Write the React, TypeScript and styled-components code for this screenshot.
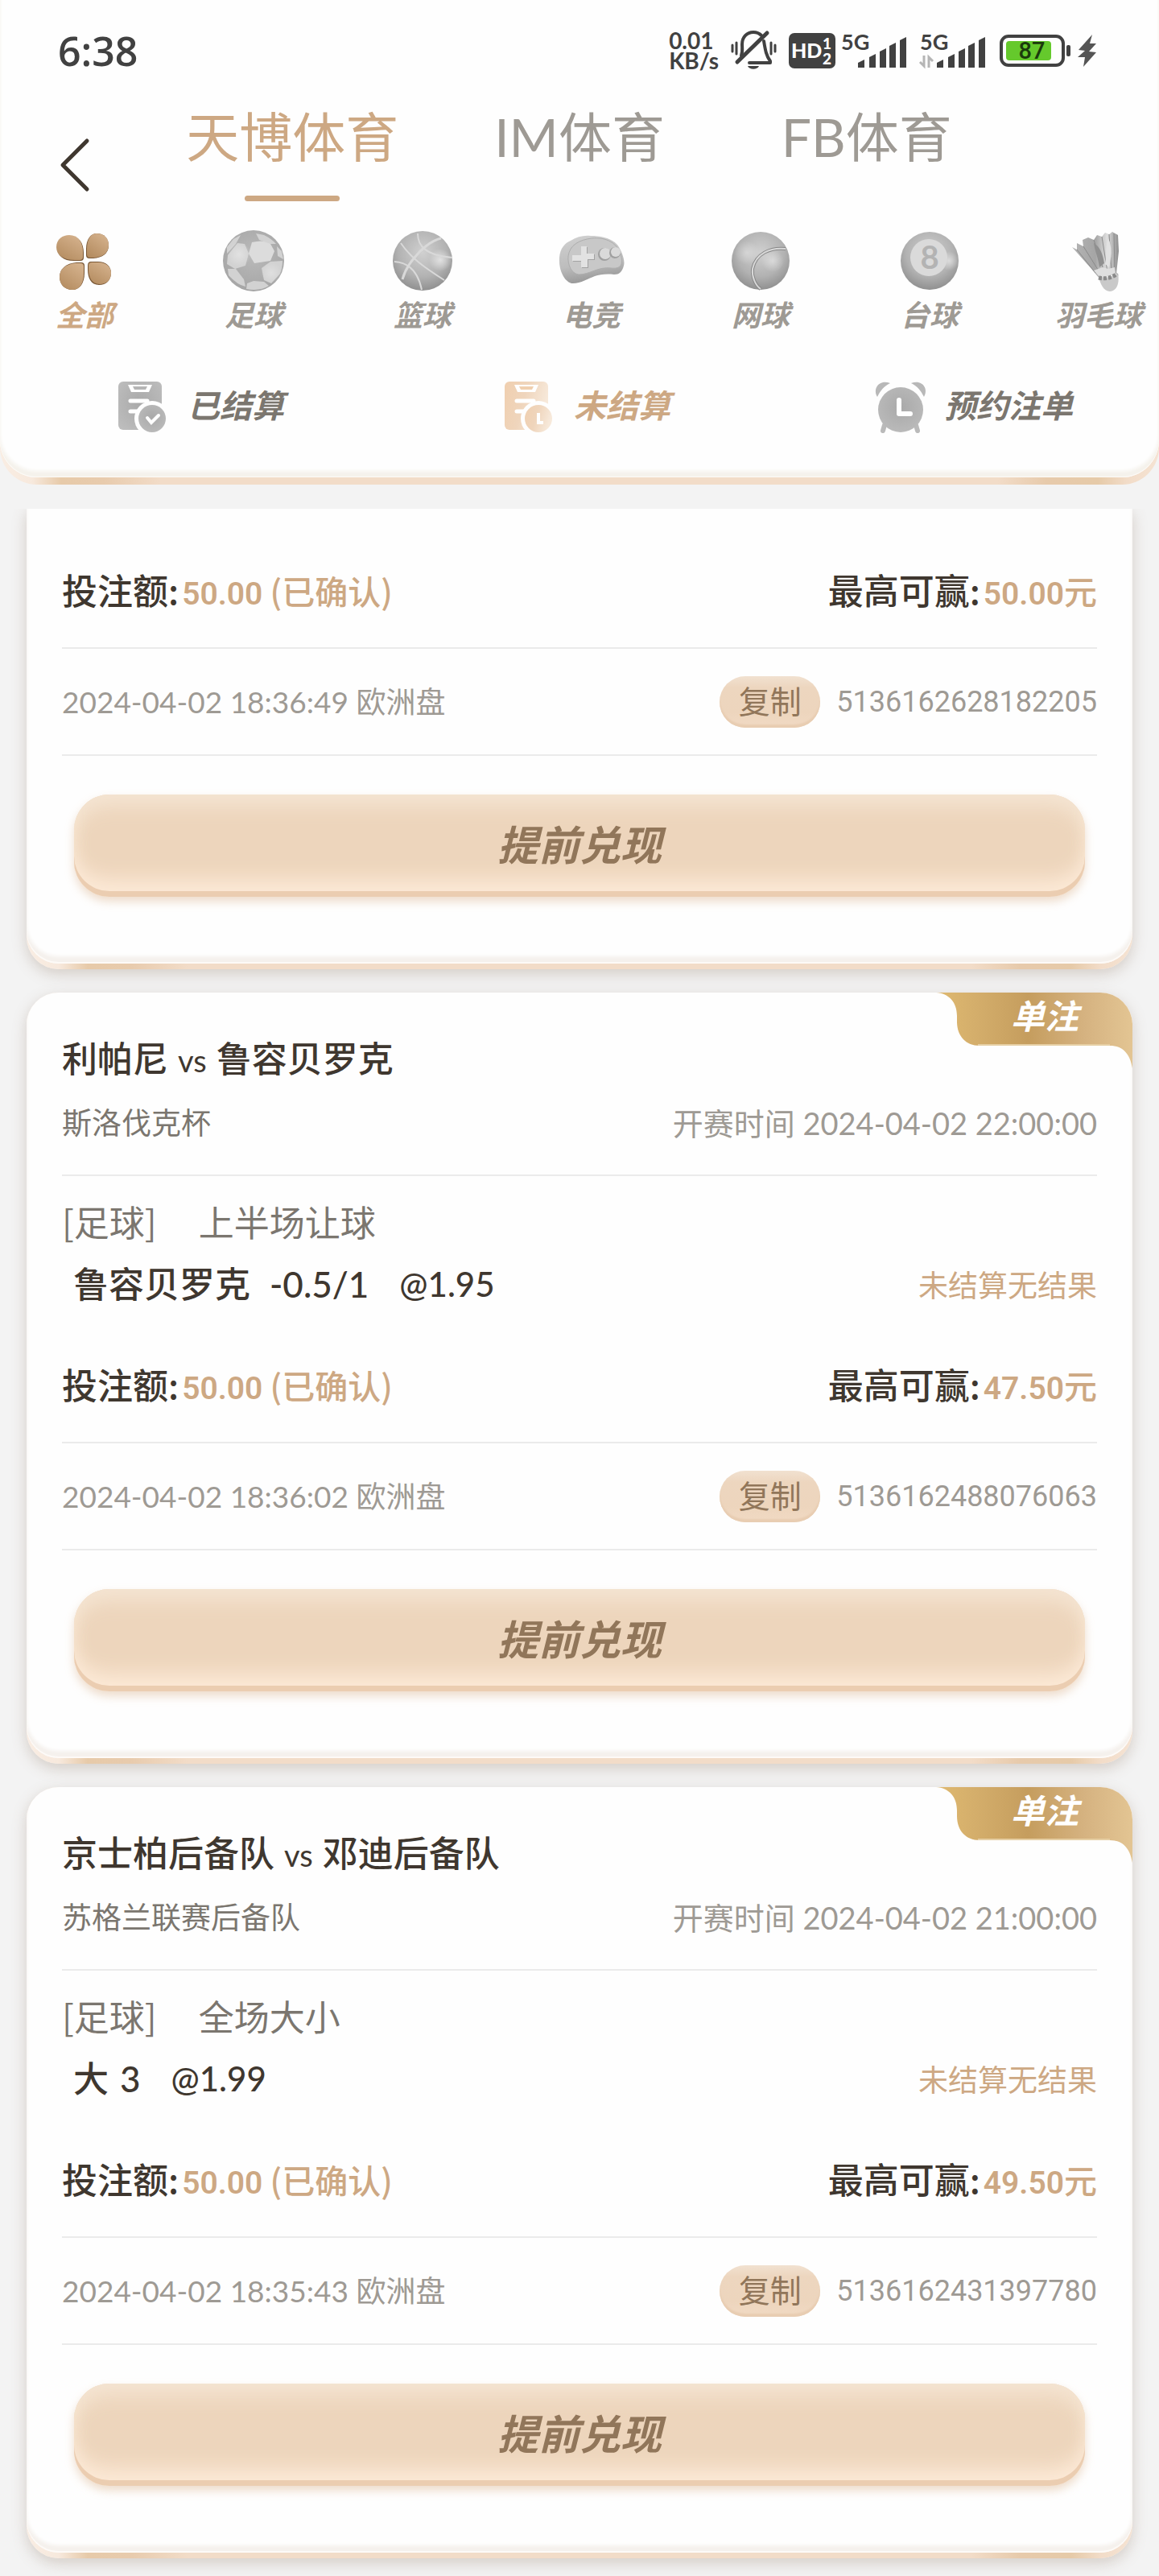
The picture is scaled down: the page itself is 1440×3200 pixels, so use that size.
import React from "react";
import styled, { createGlobalStyle, css } from "styled-components";

const cjk = '"Noto Sans CJK SC", sans-serif';
const tan = "#cda883";
const grey = "#9e9a94";
const midGrey = "#7b766f";
const ink = "#3f372f";

const GlobalStyle = createGlobalStyle`
  *, *::before, *::after { box-sizing: border-box; }
  body {
    margin: 0;
    background: #f3f3f3;
    color: ${ink};
    font-family: Lato, ${cjk};
  }
  button { border: 0; padding: 0; background: none; color: inherit; font: inherit; cursor: pointer; }
  svg { display: block; flex: none; overflow: visible; }
`;

const lipGradient =
  "linear-gradient(90deg, #f9ede3 0, #f7e9dd 40px, #e7caa9 76px, #e8cbad 130px, #f2dcc8 200px, #f2dcc8 calc(100% - 200px), #e7caab calc(100% - 140px), #e6caa8 calc(100% - 76px), #f2dcc8 calc(100% - 40px), #f5e3d3 100%)";

const Page = styled.div`
  min-height: 100vh;
  overflow: hidden;
`;

/* ---------- header ---------- */

const Header = styled.header`
  padding-bottom: 9px;
  border-radius: 0 0 46px 46px;
  background: ${lipGradient};
`;

const HeaderFace = styled.div`
  padding-bottom: 55px;
  border-radius: 0 0 46px 46px;
  background: #fefefe;
  box-shadow: inset 0 -1px 0 #fdfbf8, inset 0 -8px 4px #f5f2ec;
  overflow: hidden;
`;

const StatusBar = styled.div`
  display: flex;
  align-items: center;
  justify-content: space-between;
  height: 126px;
  padding: 0 78px 0 72px;
  color: #414141;
`;

const Clock = styled.time`
  font: 600 50px/60px "Open Sans", sans-serif;
`;

const StatusIcons = styled.div`
  display: flex;
  align-items: center;
  gap: 8px;
`;

const NetSpeed = styled.div`
  font: 700 28px/25px Lato, sans-serif;
`;

const NavRow = styled.div`
  display: flex;
  align-items: flex-end;
  padding: 0 185px 0 72px;
`;

const BackButton = styled.button`
  width: 113px;
  padding-bottom: 12px;
`;

const Tabs = styled.nav`
  display: flex;
  flex: 1;
`;

const Tab = styled.button<{ $active?: boolean }>`
  display: flex;
  flex: 1;
  flex-direction: column;
  align-items: center;
  gap: 30px;
  color: ${(p) => (p.$active ? tan : grey)};
  font: 400 66px/87px Lato, ${cjk};
  white-space: nowrap;

  &::after {
    content: "";
    width: 118px;
    height: 7px;
    border-radius: 4px;
    background: ${(p) => (p.$active ? tan : "transparent")};
  }
`;

const SportRow = styled.nav`
  display: flex;
  padding-top: 32px;
`;

const SportItem = styled.button<{ $active?: boolean }>`
  display: flex;
  flex: 0 0 210px;
  flex-direction: column;
  align-items: center;
  color: ${(p) => (p.$active ? tan : grey)};
  font: italic 700 36px/46px ${cjk};
`;

const FilterRow = styled.nav`
  display: flex;
  padding-top: 62px;
`;

const FilterItem = styled.button<{ $active?: boolean }>`
  display: flex;
  flex: 1;
  align-items: flex-start;
  justify-content: center;
  gap: 22px;
  padding-left: 20px;
  color: ${(p) => (p.$active ? tan : midGrey)};
  font: italic 700 40px/56px ${cjk};
`;

/* ---------- bet cards ---------- */

const BetList = styled.main`
  display: flex;
  flex-direction: column;
  gap: 29px;
  padding: 30px 33px 22px;
`;

const Card = styled.article<{ $clipped?: boolean }>`
  padding-bottom: 7px;
  border-radius: 40px;
  background: ${lipGradient};
  box-shadow: 0 6px 18px rgba(125, 98, 72, 0.26);
  ${(p) =>
    p.$clipped &&
    css`
      border-radius: 0 0 40px 40px;
      clip-path: inset(0 -30px -40px -30px);
    `}
`;

const CardFace = styled.div<{ $clipped?: boolean }>`
  position: relative;
  padding: ${(p) => (p.$clipped ? 70 : 50)}px 44px 83px;
  border-radius: ${(p) => (p.$clipped ? "0 0 40px 40px" : "40px")};
  background: #fefefe;
  box-shadow: inset 0 -2px 0 #fdfaf7, inset 0 -9px 4px #f5f1ed;
  overflow: hidden;
`;

const Badge = styled.div`
  position: absolute;
  top: 0;
  right: 0;
  width: 244px;
  color: #fff;
`;

const BadgeText = styled.span`
  position: absolute;
  top: 0;
  left: 93px;
  font: italic 700 42px/54px ${cjk};
`;

const Row = styled.div`
  display: flex;
  align-items: center;
  justify-content: space-between;
`;

const Match = styled.h2`
  margin: 0;
  font: 500 44px/60px ${cjk};
`;

const Versus = styled.span`
  margin: 0 12px;
  font: 400 38px/0 Lato, sans-serif;
`;

const LeagueRow = styled(Row)`
  margin-top: 26px;
  padding-bottom: 38px;
  border-bottom: 2px solid #ebebeb;
  color: ${grey};
  font-size: 38px;
  line-height: 52px;
`;

const League = styled.span`
  color: ${midGrey};
  font-size: 37px;
`;

const Market = styled.div`
  display: flex;
  gap: 52px;
  margin-top: 26px;
  color: ${midGrey};
  font: 400 44px/60px ${cjk};
`;

const PickRow = styled(Row)`
  margin: 18px 0 64px;
  padding-left: 14px;
`;

const Pick = styled.div`
  display: flex;
  font: 500 44px/60px Lato, ${cjk};
`;

const Line = styled.span<{ $gap: number }>`
  margin-left: ${(p) => p.$gap}px;
`;

const Odds = styled.span`
  margin-left: 38px;
  font-size: 42px;
`;

const Result = styled.span`
  color: ${tan};
  font: 400 37px/60px ${cjk};
`;

const StakeRow = styled(Row)`
  padding-bottom: 42px;
  border-bottom: 2px solid #ebebeb;
  font: 500 44px/60px ${cjk};
`;

const Money = styled.span`
  margin-left: 4px;
  color: ${tan};
  font-size: 41px;
  line-height: 0;
`;

const Digits = styled.span`
  font-family: Roboto, sans-serif;
  font-size: 39px;
  font-weight: 600;
`;

const MetaRow = styled(Row)`
  height: 133px;
  border-bottom: 2px solid #ebebeb;
  color: ${grey};
  font-size: 37px;
  line-height: 52px;
`;

const OrderId = styled.div`
  display: flex;
  align-items: center;
  gap: 20px;
  font-family: Roboto, sans-serif;
  font-size: 36px;
`;

const CopyButton = styled.button`
  width: 125px;
  height: 64px;
  padding-bottom: 6px;
  border-radius: 32px;
  background: linear-gradient(#f1e1d0 0, #edd6bf 14px, #edd5bd 70%, #f1dac4 100%);
  box-shadow: inset 0 -4px 2px #e8cdb2;
  color: #91765a;
  font: 400 39px/56px ${cjk};
`;

const CashOut = styled.button`
  display: block;
  width: calc(100% - 30px);
  height: 127px;
  margin: 48px auto 0;
  padding-bottom: 8px;
  border-radius: 44px;
  background: #edd5bc;
  box-shadow: inset 0 -7px 0 #ebcdb1, inset 0 -30px 24px -8px #fce9d6,
    inset 0 22px 24px -8px #f4e4d2, inset 0 0 22px #f4dfc6,
    0 6px 12px rgba(214, 170, 128, 0.4);
  color: #91765a;
  font: italic 700 51px/110px ${cjk};
`;

/* ---------- status bar drawings ---------- */

const MuteBell = () => (
  <svg width="71" height="50" viewBox="0 0 71 50" fill="none" stroke="#414141" strokeWidth="4" strokeLinecap="round">
    <path d="M20 31 C22 26 21 22 21 17 C21 8 27 2 35 2 C39 2 42 3 45 6" />
    <path d="M48 13 C50 25 51 31 56 38 V40 H30" strokeLinejoin="round" />
    <path d="M52 3 L15 39" strokeWidth="5" />
    <path d="M9 18 V26 M14 15 V29 M62 18 V26 M57 15 V29" strokeWidth="3" />
    <path d="M28 44 H42 C40 49 30 49 28 44Z" fill="#414141" stroke="none" />
  </svg>
);

const HdBadge = () => (
  <svg width="58" height="44" viewBox="0 0 58 44" fontFamily="Lato, sans-serif" fontWeight="900" fill="#fff">
    <rect width="58" height="44" rx="7" fill="#414141" />
    <text x="3" y="31" fontSize="25">HD</text>
    <text x="42" y="20" fontSize="19">1</text>
    <text x="42" y="39" fontSize="19">2</text>
  </svg>
);

const Signal = ({ data }: { data?: boolean }) => {
  const left = data ? 8 : 0;
  return (
    <svg width={left + 82} height="46" viewBox={`${-left} 0 ${left + 82} 46`}>
      <text x="-1" y="22" fontFamily="Lato, sans-serif" fontWeight="700" fontSize="27" fill="#414141">5G</text>
      <g fill="#414141">
        <path d="M20 44 V38 L28 34 V44Z" />
        <path d="M34 44 V31 L42 27 V44Z" />
        <path d="M47 44 V24 L55 20 V44Z" />
        <path d="M59 44 V17 L67 13 V44Z" />
        <path d="M72 44 V10 L80 6 V44Z" />
      </g>
      {data && (
        <g stroke="#b5b5b5" strokeWidth="3" fill="none">
          <path d="M-1 37 L4 42 V29" />
          <path d="M15 36 L10 31 V44" />
        </g>
      )}
    </svg>
  );
};

const Battery = () => (
  <svg width="97" height="40" viewBox="0 0 97 40">
    <rect x="10" y="2" width="77" height="36" rx="9" fill="none" stroke="#414141" strokeWidth="4" />
    <rect x="16" y="8" width="56" height="24" rx="4" fill="#65c92c" />
    <rect x="91" y="13" width="5" height="14" rx="2" fill="#414141" />
    <text x="48" y="30" textAnchor="middle" fontFamily="Roboto, sans-serif" fontWeight="500" fontSize="29" fill="#1b3a0c">87</text>
  </svg>
);

const Bolt = () => (
  <svg width="23" height="40" viewBox="0 0 23 40">
    <path d="M18 0 L1 19 L9 20 L0 28 L9 28 L7 40 L23 22 L14 21 L23 11 L15 11Z" fill="#555" />
  </svg>
);

/* ---------- sport drawings ---------- */

const Gradients = () => (
  <svg width="0" height="0" style={{ position: "absolute" }} aria-hidden>
    <defs>
      <linearGradient id="petal" x1="0.2" y1="1" x2="0.8" y2="0">
        <stop offset="0" stopColor="#b48c60" />
        <stop offset="1" stopColor="#d5b28d" />
      </linearGradient>
      <radialGradient id="ball" cx="0.5" cy="0.36" r="0.68">
        <stop offset="0" stopColor="#d0d0d0" />
        <stop offset="0.6" stopColor="#b2b2b2" />
        <stop offset="1" stopColor="#8a8a8a" />
      </radialGradient>
      <radialGradient id="soccer" cx="0.5" cy="0.4" r="0.65">
        <stop offset="0" stopColor="#bababa" />
        <stop offset="1" stopColor="#a4a4a4" />
      </radialGradient>
      <radialGradient id="shine" cx="0.5" cy="0.5" r="0.5">
        <stop offset="0" stopColor="#ececec" />
        <stop offset="1" stopColor="#ececec" stopOpacity="0" />
      </radialGradient>
      <linearGradient id="pad" x1="0.3" y1="0" x2="0.5" y2="1">
        <stop offset="0" stopColor="#cfcfcf" />
        <stop offset="0.6" stopColor="#bdbdbd" />
        <stop offset="1" stopColor="#949494" />
      </linearGradient>
      <linearGradient id="feather" x1="0" y1="0" x2="1" y2="0">
        <stop offset="0" stopColor="#b5b5b5" />
        <stop offset="0.5" stopColor="#a5a5a5" />
        <stop offset="0.75" stopColor="#dedede" />
        <stop offset="1" stopColor="#8c8c8c" />
      </linearGradient>
      <radialGradient id="greyFill" cx="0.5" cy="0.45" r="0.7">
        <stop offset="0" stopColor="#a9a9a9" />
        <stop offset="1" stopColor="#bebebe" />
      </radialGradient>
      <linearGradient id="tanFill" x1="0" y1="0" x2="1" y2="0.3">
        <stop offset="0" stopColor="#f0cfaf" />
        <stop offset="0.5" stopColor="#efd5bc" />
        <stop offset="1" stopColor="#f7e9da" />
      </linearGradient>
      <linearGradient id="ribbon" x1="0" y1="0" x2="1" y2="0">
        <stop offset="0" stopColor="#dfb970" />
        <stop offset="0.2" stopColor="#d4ae6b" />
        <stop offset="0.47" stopColor="#c59d5e" />
        <stop offset="0.75" stopColor="#d5b280" />
        <stop offset="1" stopColor="#e3c593" />
      </linearGradient>
    </defs>
  </svg>
);

const SportSvg = styled.svg.attrs({ viewBox: "0 0 84 84" })`
  width: 84px;
  height: 84px;
`;

const Clover = () => (
  <SportSvg>
    <g fill="#7a5836">
      <path d="M24 11 C35 11 41 20 41 32 V38 Q41 42 37 42 H31 C17 43 8 36 8 26 C8 16 16 11 24 11Z" />
      <path d="M57 8 C66 8 72 14 72 23 C72 33 64 38 53 39 H48 Q44 39 44 35 V27 C44 15 50 8 57 8Z" />
      <path d="M27 78 C17 78 11 71 11 62 C11 52 19 45 32 44 H38 Q42 44 42 48 V57 C42 70 36 78 27 78Z" />
      <path d="M60 72 C50 72 46 63 46 53 V48 Q46 43 50 43 H56 C68 42 75 48 75 57 C75 66 69 72 60 72Z" />
    </g>
    <g fill="url(#petal)">
      <path d="M23 10 C34 10 40 19 40 31 V37 Q40 41 36 41 H30 C16 41 7 35 7 25 C7 15 15 10 23 10Z" />
      <path d="M57 8 C66 8 72 14 72 22 C72 32 65 37 54 38 H49 Q45 38 45 34 V27 C45 15 50 8 57 8Z" />
      <path d="M27 78 C17 78 11 71 11 62 C11 52 19 46 31 45 H37 Q41 45 41 49 V57 C41 70 36 78 27 78Z" />
      <path d="M61 71 C51 71 47 62 47 53 V48 Q47 44 51 44 H57 C68 43 75 49 75 57 C75 66 69 71 61 71Z" />
    </g>
  </SportSvg>
);

const Soccer = () => (
  <SportSvg>
    <circle cx="42" cy="42" r="38" fill="url(#soccer)" />
    <g fill="#d2d2d2">
      <path d="M22 20 L31 21 L36 33 L32 48 L19 52 L9 46 L10 35Z" />
      <path d="M40 19 Q52 16 62 19 L68 30 L63 42 L43 45 L36 33Z" fill="#dcdcdc" />
      <path d="M52 51 L63 43 L78 42 Q78 51 75 58 L64 70 L55 66Z" />
      <path d="M34 70 L42 67 L55 68 L61 73 Q50 80 33 77Z" />
      <path d="M10 52 L20 52 L30 65 L32 74 Q22 72 11 60Z" />
      <path d="M45 8 L55 10 Q65 15 70 21 L63 21 L49 16Z" />
      <path d="M9 25 L17 15 L26 10 L20 21 L9 33Z" />
      <path d="M71 24 L77 30 L79 40 L72 36Z" />
    </g>
    <circle cx="24" cy="34" r="15" fill="url(#shine)" opacity="0.6" />
    <circle cx="64" cy="57" r="13" fill="url(#shine)" opacity="0.5" />
  </SportSvg>
);

const Basketball = () => (
  <SportSvg>
    <circle cx="42" cy="42" r="37" fill="url(#ball)" />
    <circle cx="64" cy="41" r="14" fill="url(#shine)" opacity="0.8" />
    <g fill="none" stroke="#d9d9d9" strokeWidth="2">
      <path d="M65 14 C52 17 39 29 32 38 C25 46 20 54 17 65" strokeWidth="3" />
      <path d="M36 8 C36 24 46 35 79 38" />
      <path d="M15 20 C27 38 44 50 69 66" />
      <path d="M7 43 C24 44 36 54 41 78" />
    </g>
  </SportSvg>
);

const Gamepad = () => (
  <SportSvg>
    <path d="M2 38 C3 26 9 20 16 17 C24 12 32 10 41 11 C56 11 70 15 76 25 C79 30 84 41 82 48 C80 56 76 59 70 59 C60 58 52 59 46 61 C38 64 27 71 17 70 C7 67 1 52 2 38Z" fill="url(#pad)" />
    <path d="M13 36 C15 22 27 16 42 14 C60 12 76 20 79 38 C81 50 75 52 66 51 C50 49 40 59 26 59 C17 58 12 47 13 36Z" fill="#c8c8c8" stroke="#adadad" />
    <path d="M30 25 H37 V34 H46 V41 H38 V51 H30 V43 H19 V36 H30Z" fill="#a2a2a2" />
    <path d="M29 24 H36 V33 H45 V40 H37 V50 H29 V42 H18 V35 H29Z" fill="#e2e2e2" />
    <circle cx="58" cy="34" r="8" fill="#a0a0a0" />
    <circle cx="59" cy="33" r="7" fill="#dadada" />
    <circle cx="71" cy="32" r="7" fill="#a0a0a0" />
    <circle cx="72" cy="31" r="6" fill="#dadada" />
  </SportSvg>
);

const Tennis = () => (
  <SportSvg>
    <circle cx="42" cy="42" r="36" fill="url(#ball)" />
    <circle cx="25" cy="32" r="15" fill="url(#shine)" opacity="0.5" />
    <circle cx="57" cy="42" r="14" fill="url(#shine)" opacity="0.6" />
    <path d="M73 27 C54 25 36 33 32 52 C31 61 35 72 42 77" fill="none" stroke="#888" strokeWidth="4" />
    <path d="M73 27 C54 25 36 33 32 52 C31 61 35 72 42 77" fill="none" stroke="#d8d8d8" strokeWidth="2" />
  </SportSvg>
);

const EightBall = () => (
  <SportSvg>
    <circle cx="42" cy="42" r="36" fill="url(#ball)" />
    <circle cx="66" cy="42" r="12" fill="url(#shine)" opacity="0.7" />
    <circle cx="41" cy="38" r="23" fill="#dadada" />
    <text x="42" y="52" textAnchor="middle" fontFamily="Lato, sans-serif" fontStyle="normal" fontWeight="700" fontSize="40" fill="#b3b3b3">8</text>
  </SportSvg>
);

const Shuttlecock = () => (
  <SportSvg>
    <path d="M9 25 L15 28 L15 20 L23 24 L22 16 L29 13 L36 16 L40 10 L46 12 L50 7 L55 9 L59 6 L66 10 L67 30 L64 58 L43 64 L34 53Z" fill="url(#feather)" />
    <path d="M36 16 L49 56 M23 24 L43 56 M15 28 L38 57 M46 12 L53 56 M55 9 L58 56 M61 8 L62 55" stroke="#8b8b8b" strokeWidth="1" />
    <path d="M36 20 C43 24 47 32 49 45 L43 50 C41 36 37 29 36 20Z" fill="#909090" />
    <path d="M54 14 C59 24 58 38 55 50 L50 46 C52 36 50 26 54 14Z" fill="#e2e2e2" />
    <path d="M36 54 L47 50 L54 52 L62 50 L63 58 L44 63Z" fill="#dfdfdf" />
    <path d="M42 62 C50 64 59 62 66 57 C68 68 66 79 56 80 C48 80 44 70 42 62Z" fill="#c9c9c9" />
    <path d="M42 63 C50 65 59 63 65 58" stroke="#8a8a8a" strokeWidth="5" strokeDasharray="4 2" fill="none" />
  </SportSvg>
);

/* ---------- filter drawings ---------- */

const Slip = ({ fill, pending }: { fill: string; pending?: boolean }) => (
  <svg width="64" height="64" viewBox="0 0 64 64">
    <rect width="54" height="60" rx="6" fill={fill} />
    <path d="M12 4 H42 L38 13 H16Z" fill="#fff" />
    <path d="M18 6 H36 L34 10 H20Z" fill={pending ? "#f0cfaf" : "#b5b5b5"} />
    <path d="M15 24 H36 M15 37 H24" stroke="#fff" strokeWidth="5" strokeLinecap="round" />
    <circle cx="42" cy="46" r="22" fill="#fefefe" />
    <circle cx="42" cy="46" r="17" fill={fill} />
    {pending ? (
      <path d="M42 39 V51 H48" fill="none" stroke="#fff" strokeWidth="4" />
    ) : (
      <path d="M36 45 L41 51 L50 42" fill="none" stroke="#fff" strokeWidth="4" strokeLinecap="round" />
    )}
  </svg>
);

const Alarm = () => (
  <svg width="64" height="64" viewBox="0 0 64 64">
    <path d="M12 54 L10 61 M51 54 L53 61" stroke="#bababa" strokeWidth="6" strokeLinecap="round" />
    <path d="M3 19 C-3 9 5 -3 19 2 C11 6 7 11 3 19Z M61 19 C67 9 59 -3 45 2 C53 6 57 11 61 19Z" fill="#b8b8b8" />
    <circle cx="32" cy="35" r="28" fill="url(#greyFill)" />
    <path d="M30 23 V40 H44" fill="none" stroke="#fff" strokeWidth="6" strokeLinecap="round" strokeLinejoin="round" />
  </svg>
);

const Ribbon = () => (
  <svg width="244" height="94" viewBox="0 0 244 94">
    <path d="M0 0 C16 1 26 12 26 29 V36 C26 54 37 66 54 66 H216 C232 66 241 76 244 94 V0Z" fill="url(#ribbon)" />
    <path d="M52 65 H216" stroke="#e6cfa4" strokeWidth="2" />
  </svg>
);

/* ---------- data ---------- */

const sports = [
  { name: "全部", Icon: Clover },
  { name: "足球", Icon: Soccer },
  { name: "篮球", Icon: Basketball },
  { name: "电竞", Icon: Gamepad },
  { name: "网球", Icon: Tennis },
  { name: "台球", Icon: EightBall },
  { name: "羽毛球", Icon: Shuttlecock },
];

type Bet = {
  id: string;
  placed: string;
  win: string;
  match?: {
    home: string;
    away: string;
    league: string;
    start: string;
    market: string;
    pick: string;
    line: string;
    lineGap: number;
    odds: string;
  };
};

const bets: Bet[] = [
  { id: "5136162628182205", placed: "2024-04-02 18:36:49", win: "50.00" },
  {
    id: "5136162488076063",
    placed: "2024-04-02 18:36:02",
    win: "47.50",
    match: {
      home: "利帕尼",
      away: "鲁容贝罗克",
      league: "斯洛伐克杯",
      start: "2024-04-02 22:00:00",
      market: "上半场让球",
      pick: "鲁容贝罗克",
      line: "-0.5/1",
      lineGap: 24,
      odds: "@1.95",
    },
  },
  {
    id: "5136162431397780",
    placed: "2024-04-02 18:35:43",
    win: "49.50",
    match: {
      home: "京士柏后备队",
      away: "邓迪后备队",
      league: "苏格兰联赛后备队",
      start: "2024-04-02 21:00:00",
      market: "全场大小",
      pick: "大",
      line: "3",
      lineGap: 14,
      odds: "@1.99",
    },
  },
];

const BetCard = ({ bet }: { bet: Bet }) => {
  const m = bet.match;
  return (
    <Card $clipped={!m}>
      <CardFace $clipped={!m}>
        {m && (
          <>
            <Badge>
              <Ribbon />
              <BadgeText>单注</BadgeText>
            </Badge>
            <Match>
              {m.home}
              <Versus>vs</Versus>
              {m.away}
            </Match>
            <LeagueRow>
              <League>{m.league}</League>
              <span>开赛时间 {m.start}</span>
            </LeagueRow>
            <Market>
              <span>[足球]</span>
              <span>{m.market}</span>
            </Market>
            <PickRow>
              <Pick>
                <span>{m.pick}</span>
                <Line $gap={m.lineGap}>{m.line}</Line>
                <Odds>{m.odds}</Odds>
              </Pick>
              <Result>未结算无结果</Result>
            </PickRow>
          </>
        )}
        <StakeRow>
          <div>
            投注额:
            <Money>
              <Digits>50.00</Digits> (已确认)
            </Money>
          </div>
          <div>
            最高可赢:
            <Money>
              <Digits>{bet.win}</Digits>元
            </Money>
          </div>
        </StakeRow>
        <MetaRow>
          <span>{bet.placed} 欧洲盘</span>
          <OrderId>
            <CopyButton type="button">复制</CopyButton>
            <span>{bet.id}</span>
          </OrderId>
        </MetaRow>
        <CashOut type="button">提前兑现</CashOut>
      </CardFace>
    </Card>
  );
};

export default function App() {
  return (
    <Page>
      <GlobalStyle />
      <Gradients />
      <Header>
        <HeaderFace>
          <StatusBar>
            <Clock>6:38</Clock>
            <StatusIcons>
              <NetSpeed>
                0.01
                <br />
                KB/s
              </NetSpeed>
              <MuteBell />
              <HdBadge />
              <Signal />
              <Signal data />
              <Battery />
              <Bolt />
            </StatusIcons>
          </StatusBar>
          <NavRow>
            <BackButton type="button" aria-label="返回">
              <svg width="40" height="66" viewBox="0 0 40 66">
                <path d="M36 3 L6 33 L36 63" fill="none" stroke={ink} strokeWidth="5" strokeLinecap="round" strokeLinejoin="round" />
              </svg>
            </BackButton>
            <Tabs>
              <Tab type="button" $active>天博体育</Tab>
              <Tab type="button">IM体育</Tab>
              <Tab type="button">FB体育</Tab>
            </Tabs>
          </NavRow>
          <SportRow>
            {sports.map(({ name, Icon }, i) => (
              <SportItem key={name} type="button" $active={i === 0}>
                <Icon />
                {name}
              </SportItem>
            ))}
          </SportRow>
          <FilterRow>
            <FilterItem type="button">
              <Slip fill="url(#greyFill)" />
              已结算
            </FilterItem>
            <FilterItem type="button" $active>
              <Slip fill="url(#tanFill)" pending />
              未结算
            </FilterItem>
            <FilterItem type="button">
              <Alarm />
              预约注单
            </FilterItem>
          </FilterRow>
        </HeaderFace>
      </Header>
      <BetList>
        {bets.map((bet) => (
          <BetCard key={bet.id} bet={bet} />
        ))}
      </BetList>
    </Page>
  );
}
